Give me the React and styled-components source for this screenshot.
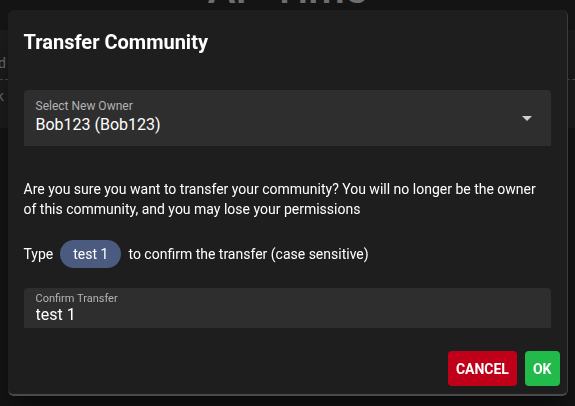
import React, { useState } from 'react';
import styled, { createGlobalStyle } from 'styled-components';

const GlobalStyle = createGlobalStyle`
  html, body {
    margin: 0;
    padding: 0;
    background: #121212;
    font-family: Roboto, "Liberation Sans", Arial, sans-serif;
    overflow: hidden;
  }
`;

const App = () => {
  const [owner] = useState('Bob123 (Bob123)');
  const [confirmText, setConfirmText] = useState('test 1');
  const communityName = 'test 1';

  return (
    <>
      <GlobalStyle />
      <Page>
        <PageTitle>AP Time</PageTitle>
        <TableCard>
          <TableRow>Selected</TableRow>
          <TableDivider />
          <TableRow>Join link</TableRow>
        </TableCard>
      </Page>

      <Backdrop>
        <Dialog>
          <Title>Transfer Community</Title>

          <Content>
            <SelectField>
              <FieldLabel>Select New Owner</FieldLabel>
              <SelectValue>{owner}</SelectValue>
              <ArrowIcon viewBox="0 0 24 24">
                <path d="M7 10l5 5 5-5z" />
              </ArrowIcon>
            </SelectField>

            <Message>
              Are you sure you want to transfer your community? You will no longer be the owner
              of this community, and you may lose your permissions
            </Message>

            <ConfirmRow>
              <span>Type</span>
              <Chip>{communityName}</Chip>
              <span>to confirm the transfer (case sensitive)</span>
            </ConfirmRow>

            <TextField>
              <SmallLabel>Confirm Transfer</SmallLabel>
              <TextInput
                value={confirmText}
                onChange={(e) => setConfirmText(e.target.value)}
              />
            </TextField>
          </Content>

          <Actions>
            <ActionButton $color="#c00018">Cancel</ActionButton>
            <ActionButton $color="#22bb4b">OK</ActionButton>
          </Actions>
        </Dialog>
      </Backdrop>
    </>
  );
};

// Page behind the dialog
const Page = styled.div`
  height: 406px;
  display: flex;
  flex-direction: column;
  background: #2a2a2a;
`;

const PageTitle = styled.h1`
  margin: -36px 0 0;
  height: 66px;
  text-align: center;
  font-size: 42px;
  font-weight: 500;
  color: #e0e0e0;
`;

const TableCard = styled.div`
  height: 98px;
  background: #3a3a3a;
  display: flex;
  flex-direction: column;
  justify-content: center;
  gap: 8px;
  text-indent: -48px;
`;

const TableRow = styled.div`
  font-size: 14px;
  color: #ddd;
`;

const TableDivider = styled.div`
  border-top: 1px dashed #999;
`;

// Dialog
const Backdrop = styled.div`
  position: fixed;
  inset: 0;
  background: rgba(0, 0, 0, 0.5);
  display: flex;
  align-items: center;
  justify-content: center;
`;

const Dialog = styled.div`
  width: 560px;
  height: 386px;
  box-sizing: border-box;
  background: #1e1e1e;
  border-radius: 6px;
  border-right: 1px solid #3c3c3c;
  border-bottom: 2px solid #4a4a4a;
  box-shadow: 0 11px 15px -7px rgba(0, 0, 0, 0.4), 0 24px 38px 3px rgba(0, 0, 0, 0.3);
  display: flex;
  flex-direction: column;
  color: #fff;
`;

const Title = styled.h2`
  margin: 0;
  padding: 16px 16px 0;
  font-size: 20px;
  line-height: 32px;
  font-weight: 700;
`;

const Content = styled.div`
  flex: 1;
  padding: 32px 16px 0;
  display: flex;
  flex-direction: column;
`;

const SelectField = styled.div`
  position: relative;
  height: 56px;
  box-sizing: border-box;
  padding: 8px 12px 0;
  background: #2e2e2e;
  border-radius: 4px 4px 0 0;
`;

const FieldLabel = styled.div`
  font-size: 12px;
  line-height: 16px;
  color: #b3b3b3;
`;

const SelectValue = styled.div`
  font-size: 16px;
  line-height: 22px;
  color: #fff;
`;

const ArrowIcon = styled.svg`
  position: absolute;
  right: 12px;
  top: 16px;
  width: 24px;
  height: 24px;
  fill: #cfcfcf;
`;

const Message = styled.p`
  margin: 33px 0 0;
  font-size: 14px;
  line-height: 20px;
  color: #fff;
`;

const ConfirmRow = styled.div`
  margin-top: 21px;
  display: flex;
  align-items: center;
  gap: 7px;
  font-size: 14px;
  line-height: 20px;
`;

const Chip = styled.span`
  height: 28px;
  display: inline-flex;
  align-items: center;
  padding: 0 13px;
  border-radius: 14px;
  background: #4b5b80;
  color: #fff;
  font-size: 14px;
`;

const TextField = styled.div`
  margin-top: 20px;
  height: 40px;
  box-sizing: border-box;
  padding: 4px 12px 0;
  background: #2e2e2e;
  border-radius: 4px 4px 0 0;
  display: flex;
  flex-direction: column;
`;

const SmallLabel = styled.label`
  font-size: 11px;
  line-height: 13px;
  color: #b3b3b3;
`;

const TextInput = styled.input`
  border: none;
  outline: none;
  background: transparent;
  padding: 0;
  font-family: inherit;
  font-size: 16px;
  line-height: 20px;
  color: #fff;
`;

const Actions = styled.div`
  display: flex;
  justify-content: flex-end;
  gap: 8px;
  padding: 0 7px 8px;
`;

const ActionButton = styled.button`
  height: 35px;
  padding: 0 8px;
  border: none;
  border-radius: 4px;
  background: ${(p) => p.$color};
  color: #fff;
  font-family: inherit;
  font-size: 14px;
  font-weight: 700;
  text-transform: uppercase;
  cursor: pointer;
`;

export default App;
